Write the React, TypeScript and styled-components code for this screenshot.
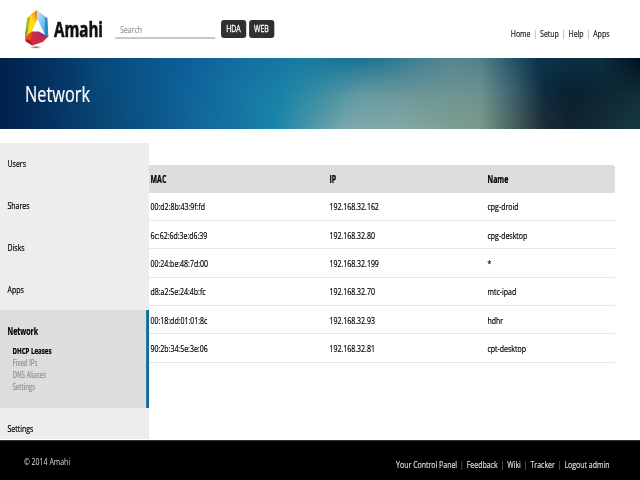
import React from "react";
import styled, { createGlobalStyle, css } from "styled-components";

/* The whole page is drawn condensed; x() converts a visible width to page units. */
const CONDENSE = 0.72;
const x = (n: number) => `${n / CONDENSE}px`;

const GlobalStyle = createGlobalStyle`
  body { margin: 0; background: #fff; overflow: hidden; }
  *, *::before, *::after { box-sizing: border-box; }
`;

const Page = styled.div`
  width: ${x(640)};
  height: 480px;
  display: flex;
  flex-direction: column;
  overflow: hidden;
  transform: scaleX(${CONDENSE});
  transform-origin: 0 0;
  background: #fff;
  color: #000;
  font: 9.7px/14px "Open Sans", sans-serif;
  -webkit-text-stroke: 0.22px currentColor;
`;

const Header = styled.header`
  flex: none;
  height: 58px;
  display: flex;
  align-items: flex-start;
  padding: 0 ${x(30.5)} 0 ${x(24)};
`;

const LogoMark = styled.svg`
  width: ${x(26)};
  height: 41px;
  margin-top: 9px;
  flex: none;
`;

const Brand = styled.div`
  width: ${x(65)};
  padding: 15px 0 0 ${x(4)};
  color: #111;
  font: 700 21px/28px "Open Sans", sans-serif;
  -webkit-text-stroke: 0.6px currentColor;
  white-space: nowrap;
`;

const Search = styled.input`
  width: ${x(100)};
  height: 20px;
  margin-top: 19px;
  padding: 2px ${x(5)} 0;
  border: 0;
  border-bottom: 2px solid #c9c9c9;
  outline: 0;
  font: 9.7px/14px "Open Sans", sans-serif;
  background: transparent;
  &::placeholder { color: #999; opacity: 1; }
`;

const Modes = styled.div`
  display: flex;
  gap: ${x(3)};
  margin: 20px 0 0 ${x(6)};
`;

const ModeButton = styled.button`
  width: ${x(25)};
  height: 18px;
  padding: 0;
  border: 0;
  border-radius: ${x(3)} / 3px;
  background: #303030;
  color: #fff;
  font: 9.7px/18px "Open Sans", sans-serif;
  -webkit-text-stroke: 0.3px currentColor;
`;

const Links = styled.nav<{ $dark?: boolean }>`
  display: flex;
  margin-left: auto;
  white-space: nowrap;
  ${(p) => p.$dark ? css`color: #ddd; padding-top: 17px;` : css`color: #222; padding-top: 26.5px;`}
`;

const Link = styled.a`
  & + &::before {
    content: "|";
    margin: 0 ${x(2.9)};
    color: #888;
    -webkit-text-stroke: 0;
  }
`;

const Banner = styled.section`
  flex: none;
  height: 71px;
  display: grid;
  background: linear-gradient(90deg, #00224a 0%, #043363 8%, #084a7a 16%, #0a5990 25%, #136da1 37%, #167c9f 47%, #1b7193 57%, #357b91 63%, #588690 70%, #528289 75%, #2d5f70 79%, #0b344b 84%, #0a2f3f 94%, #03101f 100%);
  & > * { grid-area: 1 / 1; }
`;

const Glow = styled.div<{ $low?: boolean }>`
  ${(p) => p.$low ? css`
    background: linear-gradient(90deg, #00224a 0%, #042c5c 6%, #094673 16%, #11679c 31%, #1a84a8 43%, #4193a8 47.5%, #7da9aa 54%, #84a9a5 62%, #7a9a87 75%, #4a6360 80%, #1e2c35 85%, #11232d 89%, #163a44 100%);
    mask-image: linear-gradient(transparent 45%, #000 100%);
  ` : css`
    background: linear-gradient(90deg, #00224a 0%, #043363 8%, #084a7a 16%, #0e629a 29%, #1879a5 39%, #1a82a8 44%, #398da3 50%, #6299a3 57%, #6b9598 65%, #6c928f 75%, #3f6470 80%, #0e2c3e 85%, #0a2030 89%, #102e38 100%);
    mask-image: linear-gradient(transparent 0%, #000 50%);
  `}
`;

const Title = styled.h1`
  z-index: 1;
  margin: 0;
  padding: 19px 0 0 ${x(25)};
  color: #fff;
  font: 400 22.7px/34px "Open Sans", sans-serif;
`;

const Body = styled.main`
  flex: none;
  height: 311px;
  display: flex;
  align-items: flex-start;
  overflow: hidden;
`;

const Sidebar = styled.aside`
  flex: none;
  width: ${x(149)};
  height: 296px;
  margin-top: 14px;
  background: #ededed;
`;

const Item = styled.div<{ $active?: boolean }>`
  height: 42px;
  padding: 14px ${x(7.5)};
  ${(p) => p.$active && css`
    height: 98px;
    margin-top: -1px;
    padding-top: 15px;
    background: #ddd;
    border-right: ${x(3)} solid #0f6b98;
    font-weight: 700;
  `}
`;

const SubList = styled.div`
  padding: 6px 0 0 ${x(5)};
  font: 8.5px/12px "Open Sans", sans-serif;
`;

const SubItem = styled.div<{ $current?: boolean }>`
  color: ${(p) => (p.$current ? "#000" : "#929292")};
  font-weight: ${(p) => (p.$current ? 700 : 400)};
`;

const Table = styled.div`
  width: ${x(466)};
  margin-top: 36px;
`;

const Row = styled.div<{ $head?: boolean }>`
  display: grid;
  grid-template-columns: ${x(179)} ${x(158)} 1fr;
  align-items: center;
  height: 28.4px;
  padding: 2px 0 0 ${x(1.5)};
  border-bottom: 1.6px solid #e6e6e6;
  ${(p) => p.$head && css`
    height: 27.5px;
    border: 0;
    border-radius: 0 ${x(3)} 0 0 / 0 3px 0 0;
    background: #ddd;
    font-weight: 700;
  `}
`;

const Footer = styled.footer`
  flex: none;
  height: 40px;
  display: flex;
  padding: 0 ${x(30.5)} 0 ${x(24)};
  border-top: 1px solid #333;
  background: #000;
`;

const Copyright = styled.div`
  padding-top: 14px;
  color: #ddd;
  -webkit-text-stroke: 0;
`;

const leases = [
  ["00:d2:8b:43:9f:fd", "192.168.32.162", "cpg-droid"],
  ["6c:62:6d:3e:d6:39", "192.168.32.80", "cpg-desktop"],
  ["00:24:be:48:7d:00", "192.168.32.199", "*"],
  ["d8:a2:5e:24:4b:fc", "192.168.32.70", "mtc-ipad"],
  ["00:18:dd:01:01:8c", "192.168.32.93", "hdhr"],
  ["90:2b:34:5e:3e:06", "192.168.32.81", "cpt-desktop"],
];

function Logo() {
  return (
    <LogoMark viewBox="0 0 26 41" preserveAspectRatio="none">
      <defs>
        <linearGradient id="gold" x1="0" y1="1" x2="1" y2="0">
          <stop offset="0" stopColor="#f8df15" /><stop offset=".6" stopColor="#ffdc18" /><stop offset="1" stopColor="#ef5a18" />
        </linearGradient>
        <linearGradient id="leaf" x1="0" y1="1" x2="1" y2="0">
          <stop offset="0" stopColor="#238b2b" /><stop offset=".5" stopColor="#9fc41c" /><stop offset="1" stopColor="#f4a315" />
        </linearGradient>
        <linearGradient id="sky" x1="0" y1="0" x2="1" y2="1">
          <stop offset="0" stopColor="#c5ebf7" /><stop offset="1" stopColor="#2f9bd9" />
        </linearGradient>
        <linearGradient id="flame" x1="0" y1="0" x2="1" y2="1">
          <stop offset="0" stopColor="#f5731e" /><stop offset="1" stopColor="#cc1719" />
        </linearGradient>
        <linearGradient id="plum">
          <stop offset="0" stopColor="#d8283a" /><stop offset="1" stopColor="#7d3494" />
        </linearGradient>
        <radialGradient id="shade">
          <stop offset="0" stopColor="#444" /><stop offset="1" stopColor="#fff" stopOpacity="0" />
        </radialGradient>
      </defs>
      <ellipse cx="12" cy="38.2" rx="8" ry="2" fill="url(#shade)" />
      <path d="M3.5 8.5 13 1 14 11 8 23 1.2 27.5Z" fill="url(#gold)" />
      <path d="M3.5 8.5 6.5 8 4 24 1.2 27.5Z" fill="url(#leaf)" />
      <path d="M13 1 23.5 9 24.5 27.5 21 25.5 14 11Z" fill="url(#sky)" />
      <path d="M21.5 8 23.5 9 24.5 27.5 21 25.5Z" fill="#268dcd" />
      <path d="M13.5 10 21 25.5 15 23 7.5 24Z" fill="#fff" />
      <path d="M1.2 27.5 8 22.5 12 26 8.7 36.5 2 32Z" fill="url(#flame)" />
      <path d="M8 22.5 15 22.5 24.5 27.5 20 31 7 31.5Z" fill="url(#plum)" />
      <path d="M7 31.5 24.5 27.5 19 33 8.7 36.5Z" fill="#d3293d" />
      <path d="M1.8 30 7 31.5 8.7 36.5 2 32.5Z" fill="#b31b20" />
    </LogoMark>
  );
}

export default function App() {
  return (
    <>
      <GlobalStyle />
      <Page>
        <Header>
          <Logo />
          <Brand>Amahi</Brand>
          <Search placeholder="Search" />
          <Modes><ModeButton>HDA</ModeButton><ModeButton>WEB</ModeButton></Modes>
          <Links>
            {["Home", "Setup", "Help", "Apps"].map((t) => <Link key={t}>{t}</Link>)}
          </Links>
        </Header>
        <Banner><Glow /><Glow $low /><Title>Network</Title></Banner>
        <Body>
          <Sidebar>
            {["Users", "Shares", "Disks", "Apps"].map((t) => <Item key={t}>{t}</Item>)}
            <Item $active>
              Network
              <SubList>
                <SubItem $current>DHCP Leases</SubItem>
                <SubItem>Fixed IPs</SubItem>
                <SubItem>DNS Aliases</SubItem>
                <SubItem>Settings</SubItem>
              </SubList>
            </Item>
            <Item>Settings</Item>
          </Sidebar>
          <Table>
            <Row $head><span>MAC</span><span>IP</span><span>Name</span></Row>
            {leases.map(([mac, ip, name]) => (
              <Row key={mac}><span>{mac}</span><span>{ip}</span><span>{name}</span></Row>
            ))}
          </Table>
        </Body>
        <Footer>
          <Copyright>© 2014 Amahi</Copyright>
          <Links $dark>
            {["Your Control Panel", "Feedback", "Wiki", "Tracker", "Logout admin"].map((t) => <Link key={t}>{t}</Link>)}
          </Links>
        </Footer>
      </Page>
    </>
  );
}
